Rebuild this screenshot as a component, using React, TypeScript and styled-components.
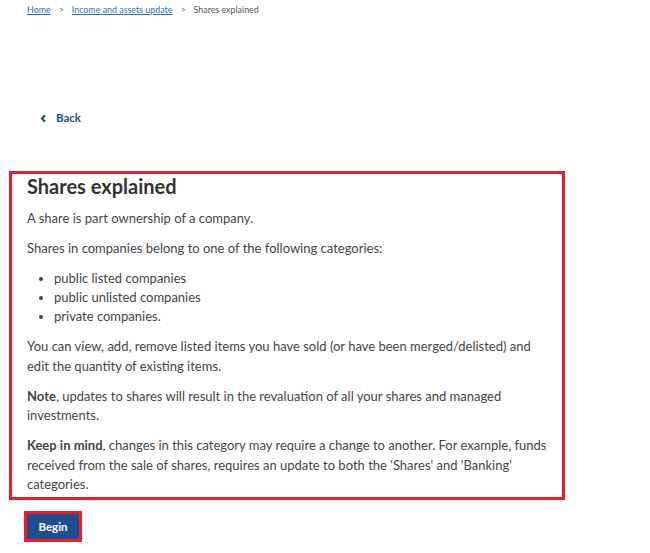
import React from 'react';
import styled, { createGlobalStyle } from 'styled-components';

const GlobalStyle = createGlobalStyle`
  html, body {
    margin: 0;
    padding: 0;
    background: #fff;
  }
  body {
    font-family: Lato, "Open Sans", Arial, sans-serif;
    color: #444;
  }
`;

const Page = styled.div`
  width: 650px;
  min-height: 553px;
  padding: 4px 0 0 0;
  box-sizing: border-box;
`;

const Breadcrumb = styled.nav`
  display: flex;
  align-items: center;
  gap: 8px;
  padding-left: 27px;
  font-size: 8.9px;
  line-height: 12px;
  color: #555;
`;

const Crumb = styled.a`
  color: #2a6ebb;
  text-decoration: underline;
`;

const Sep = styled.span`
  color: #777;
`;

const BackLink = styled.a`
  display: flex;
  align-items: center;
  gap: 9px;
  margin: 95px 0 0 40px;
  font-size: 11.5px;
  font-weight: 700;
  color: #1d4f91;
  text-decoration: none;
  line-height: 14px;
`;

const Panel = styled.section`
  margin: 46px 0 0 9px;
  width: 556px;
  box-sizing: border-box;
  border: 3px solid #ee1c25;
  padding: 0 12px 2px 15px;
`;

const Title = styled.h1`
  margin: 0 0 11px 0;
  font-size: 20px;
  line-height: 24px;
  font-weight: 700;
  color: #333;
`;

const Para = styled.p`
  margin: 0 0 10.5px 0;
  font-size: 13px;
  line-height: 19.5px;
  &:last-child {
    margin-bottom: 0;
  }
`;

const Bullets = styled.ul`
  margin: 0 0 11px 0;
  padding-left: 27px;
  font-size: 13px;
  line-height: 19px;
  li::marker {
    color: #444;
  }
`;

const ButtonFrame = styled.div`
  width: fit-content;
  margin: 11px 0 0 24px;
  border: 3px solid #ee1c25;
`;

const BeginButton = styled.button`
  display: block;
  width: 52px;
  height: 25px;
  border: none;
  background: #1f4f8f;
  color: #fff;
  font-family: Lato, "Open Sans", Arial, sans-serif;
  font-size: 11.5px;
  font-weight: 700;
  padding: 0;
`;

const Chevron = () => (
  <svg width="7" height="9" viewBox="0 0 7 9">
    <path d="M5 1.2 L2 4.5 L5 7.8" fill="none" stroke="#1d4f91" strokeWidth="2.2" />
  </svg>
);

const App = () => {
  return (
    <Page>
      <GlobalStyle />
      <Breadcrumb>
        <Crumb>Home</Crumb>
        <Sep>&gt;</Sep>
        <Crumb>Income and assets update</Crumb>
        <Sep>&gt;</Sep>
        <span>Shares explained</span>
      </Breadcrumb>
      <BackLink>
        <Chevron />
        Back
      </BackLink>
      <Panel>
        <Title>Shares explained</Title>
        <Para>A share is part ownership of a company.</Para>
        <Para>Shares in companies belong to one of the following categories:</Para>
        <Bullets>
          <li>public listed companies</li>
          <li>public unlisted companies</li>
          <li>private companies.</li>
        </Bullets>
        <Para>
          You can view, add, remove listed items you have sold (or have been merged/delisted) and edit the quantity of existing items.
        </Para>
        <Para>
          <strong>Note</strong>, updates to shares will result in the revaluation of all your shares and managed investments.
        </Para>
        <Para>
          <strong>Keep in mind</strong>, changes in this category may require a change to another. For example, funds received from the sale of shares, requires an update to both the 'Shares' and 'Banking' categories.
        </Para>
      </Panel>
      <ButtonFrame>
        <BeginButton>Begin</BeginButton>
      </ButtonFrame>
    </Page>
  );
};

export default App;
